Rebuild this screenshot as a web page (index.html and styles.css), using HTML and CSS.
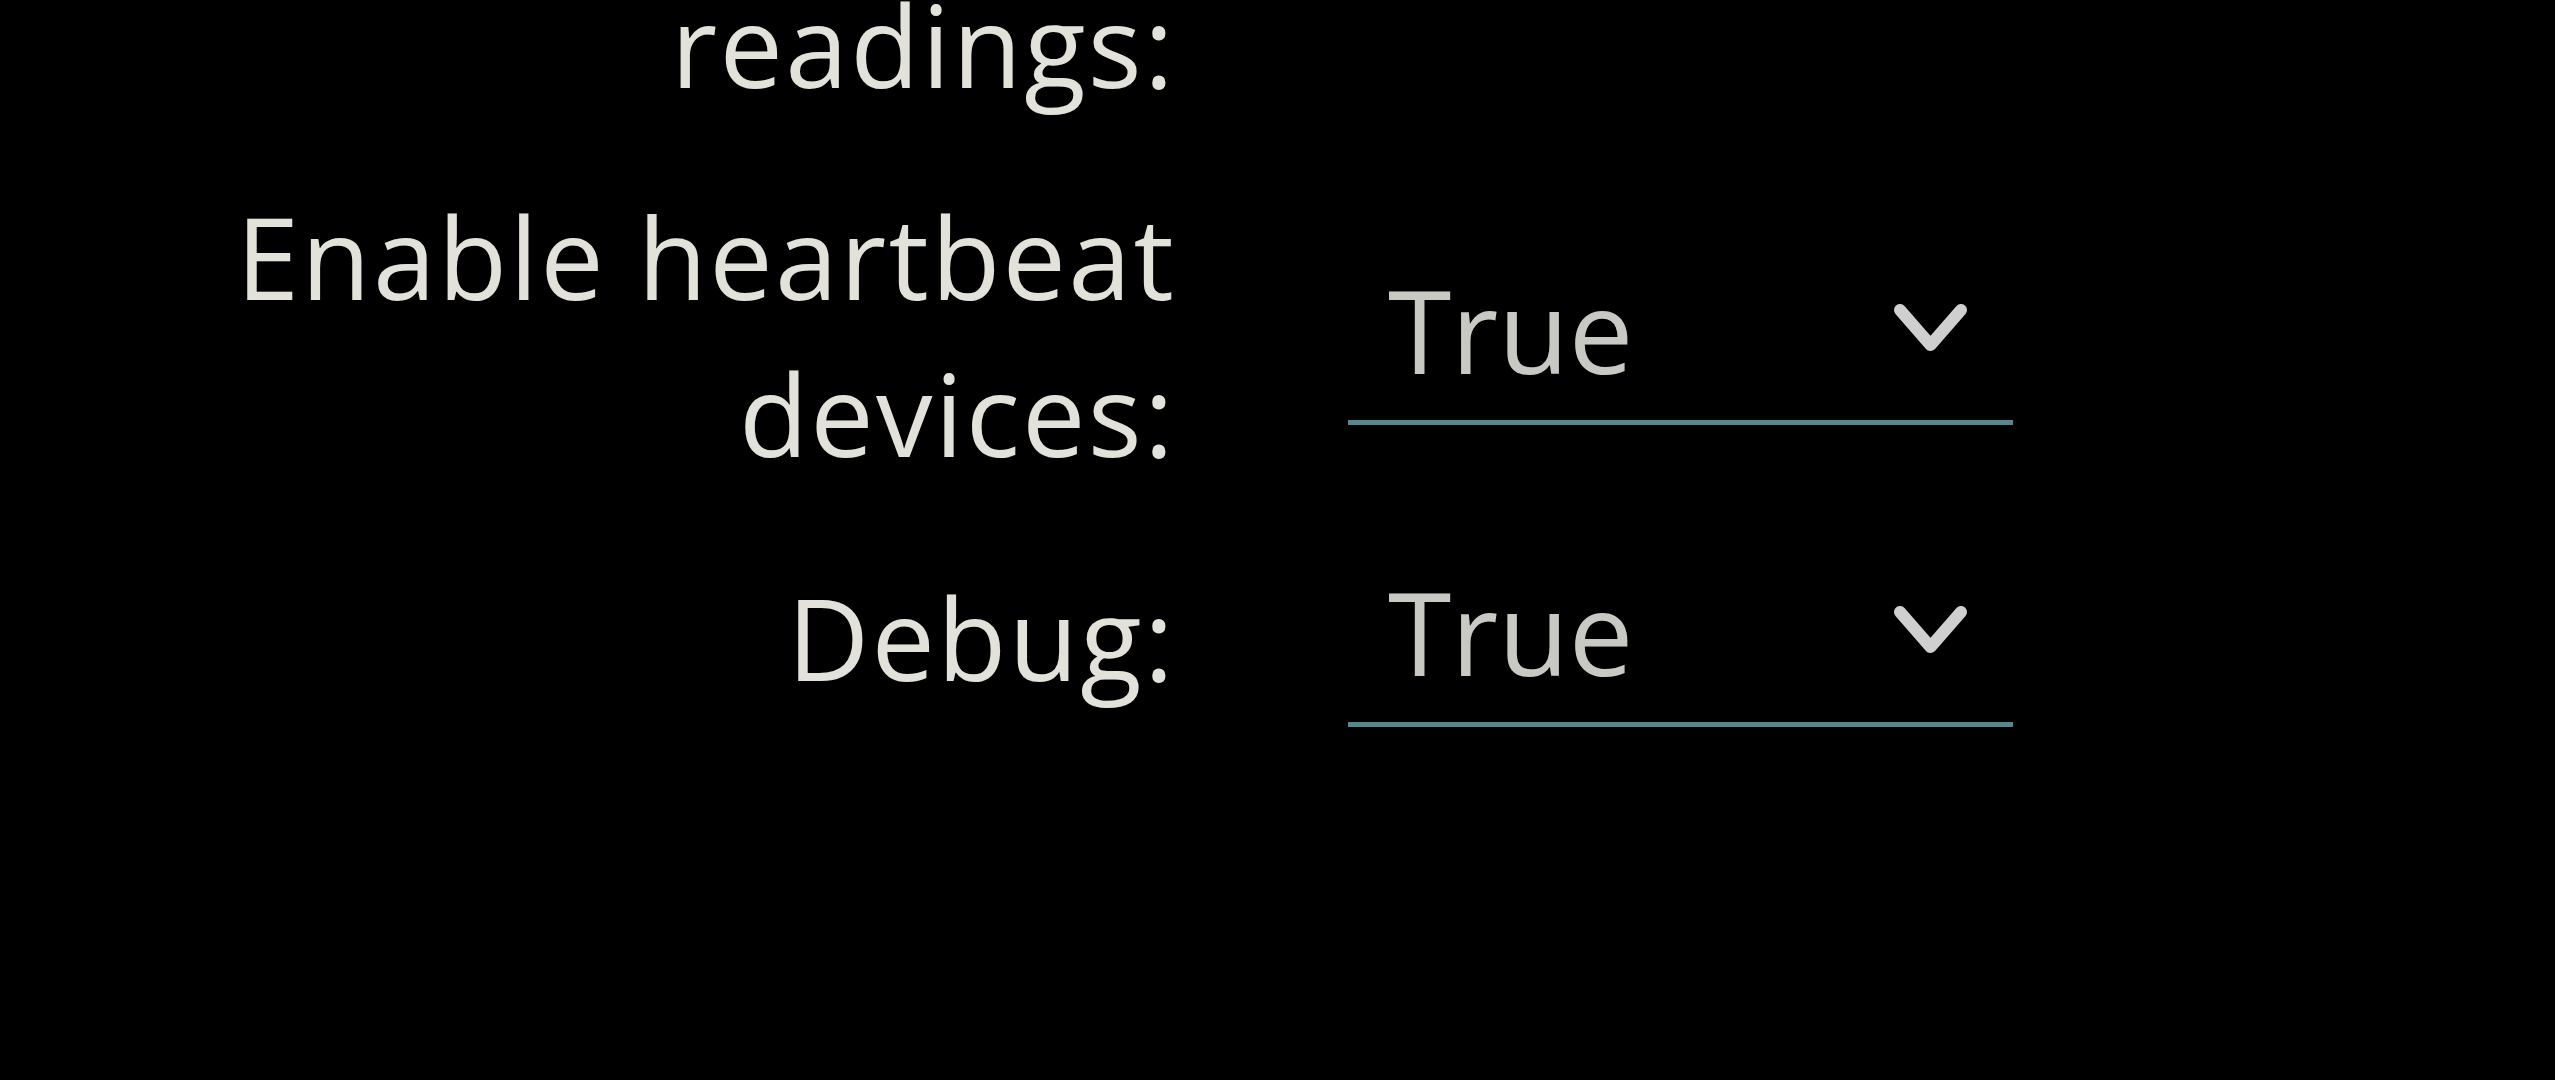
FILE: index.html
```
<!DOCTYPE html>
<html lang="en">
<head>
<meta charset="utf-8">
<title>Settings</title>
<link rel="stylesheet" href="styles.css">
</head>
<body>
<form class="settings">
  <label class="field-label">readings:</label>
  <div class="field-empty"></div>

  <label class="field-label">Enable heartbeat devices:</label>
  <div class="select">
    <span class="select-value">True</span>
    <svg class="chevron" viewBox="0 0 75 50" width="75" height="50" aria-hidden="true">
      <polyline points="7,7 37.5,42 68,7" fill="none" stroke="currentColor" stroke-width="12" stroke-linecap="round" stroke-linejoin="round"/>
    </svg>
  </div>

  <label class="field-label">Debug:</label>
  <div class="select">
    <span class="select-value">True</span>
    <svg class="chevron" viewBox="0 0 75 50" width="75" height="50" aria-hidden="true">
      <polyline points="7,7 37.5,42 68,7" fill="none" stroke="currentColor" stroke-width="12" stroke-linecap="round" stroke-linejoin="round"/>
    </svg>
  </div>
</form>
</body>
</html>
```
FILE: styles.css
```
html, body {
  margin: 0;
  padding: 0;
  background: #000;
  height: 100%;
  overflow: hidden;
}

body {
  font-family: "Open Sans", "Noto Sans", sans-serif;
  font-size: 115px;
  line-height: 157px;
  color: #e4e4dc;
}

.settings {
  display: grid;
  grid-template-columns: 1176px 665px;
  column-gap: 172px;
  row-gap: 55px;
  align-items: center;
  margin-top: -34px;
}

.field-label {
  text-align: right;
  color: #e2e2da;
  font-size: 113px;
  letter-spacing: 2.3px;
}

.select {
  box-sizing: border-box;
  display: flex;
  align-items: center;
  justify-content: space-between;
  padding: 6px 45px 12px 40px;
  border-bottom: 5px solid #55888e;
}

.select-value {
  color: #c9c9c3;
}

.chevron {
  display: block;
  color: #cfcfcf;
  margin-top: -4px;
}
```
